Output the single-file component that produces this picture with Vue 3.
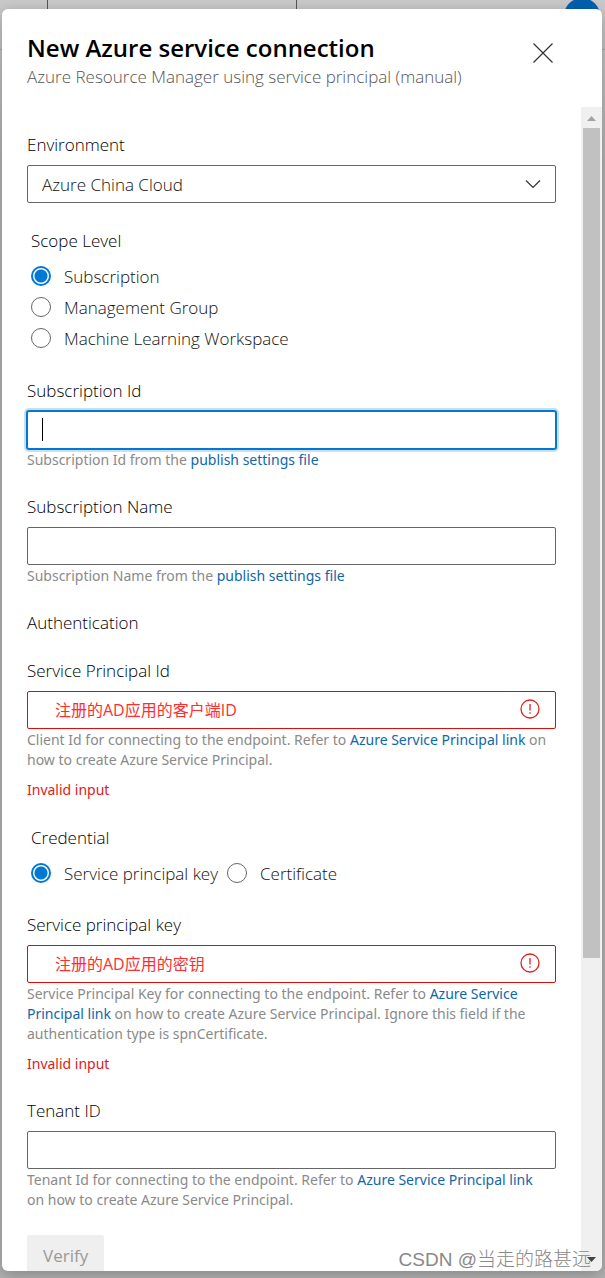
<script setup>
import {ref} from 'vue';

const environment = ref('Azure China Cloud');
const scopeLevel = ref('Subscription');
const credential = ref('Service principal key');

const scopeLevels = ['Subscription', 'Management Group', 'Machine Learning Workspace'];
const credentials = ['Service principal key', 'Certificate'];

const subscriptionId = ref('');
const subscriptionName = ref('');
const principalId = ref('注册的AD应用的客户端ID');
const principalKey = ref('注册的AD应用的密钥');
const tenantId = ref('');
</script>

<template>
  <div class="backdrop">
    <div class="page-behind">
      <span class="search-box"></span>
      <span class="avatar"></span>
    </div>

    <section class="panel" role="dialog" aria-labelledby="panel-title">
      <header class="panel-header">
        <div>
          <h1 id="panel-title">New Azure service connection</h1>
          <p class="subtitle">Azure Resource Manager using service principal (manual)</p>
        </div>
        <button class="close" type="button" aria-label="Close">
          <svg width="20" height="20" viewBox="0 0 20 20">
            <path d="M0.5 0.5L19.5 19.5M19.5 0.5L0.5 19.5" />
          </svg>
        </button>
      </header>

      <div class="panel-body">
        <form class="form" @submit.prevent>
          <div class="field">
            <label for="environment">Environment</label>
            <div class="control">
              <select id="environment" v-model="environment">
                <option>Azure China Cloud</option>
              </select>
              <svg class="chevron" width="16" height="10" viewBox="0 0 16 10">
                <path d="M1 1.5L8 8.5L15 1.5" />
              </svg>
            </div>
          </div>

          <fieldset>
            <legend>Scope Level</legend>
            <div class="radios stacked">
              <label v-for="level in scopeLevels" :key="level" class="radio">
                <input v-model="scopeLevel" type="radio" name="scope" :value="level">
                {{ level }}
              </label>
            </div>
          </fieldset>

          <div class="field">
            <label for="subscription-id">Subscription Id</label>
            <div class="control">
              <input id="subscription-id" v-model="subscriptionId" class="active" type="text">
              <span class="caret"></span>
            </div>
            <p class="help">Subscription Id from the <a href="#">publish settings file</a></p>
          </div>

          <div class="field">
            <label for="subscription-name">Subscription Name</label>
            <div class="control">
              <input id="subscription-name" v-model="subscriptionName" type="text">
            </div>
            <p class="help">Subscription Name from the <a href="#">publish settings file</a></p>
          </div>

          <h2>Authentication</h2>

          <div class="field">
            <label for="principal-id">Service Principal Id</label>
            <div class="control">
              <input id="principal-id" v-model="principalId" class="invalid" type="text">
              <svg class="alert" width="20" height="20" viewBox="0 0 20 20">
                <circle cx="10" cy="10" r="9" />
                <path d="M10 5V11.5M10 13.2V14.8" />
              </svg>
            </div>
            <p class="help">
              Client Id for connecting to the endpoint. Refer to
              <a href="#">Azure Service Principal link</a> on how to create Azure Service Principal.
            </p>
            <p class="error">Invalid input</p>
          </div>

          <fieldset>
            <legend>Credential</legend>
            <div class="radios">
              <label v-for="kind in credentials" :key="kind" class="radio">
                <input v-model="credential" type="radio" name="credential" :value="kind">
                {{ kind }}
              </label>
            </div>
          </fieldset>

          <div class="field">
            <label for="principal-key">Service principal key</label>
            <div class="control">
              <input id="principal-key" v-model="principalKey" class="invalid" type="text">
              <svg class="alert" width="20" height="20" viewBox="0 0 20 20">
                <circle cx="10" cy="10" r="9" />
                <path d="M10 5V11.5M10 13.2V14.8" />
              </svg>
            </div>
            <p class="help">
              Service Principal Key for connecting to the endpoint. Refer to
              <a href="#">Azure Service Principal link</a> on how to create Azure Service Principal.
              Ignore this field if the authentication type is spnCertificate.
            </p>
            <p class="error">Invalid input</p>
          </div>

          <div class="field">
            <label for="tenant-id">Tenant ID</label>
            <div class="control">
              <input id="tenant-id" v-model="tenantId" type="text">
            </div>
            <p class="help">
              Tenant Id for connecting to the endpoint. Refer to
              <a href="#">Azure Service Principal link</a> on how to create Azure Service Principal.
            </p>
          </div>

          <button class="verify" type="button" disabled>Verify</button>
        </form>

        <div class="scrollbar" aria-hidden="true">
          <svg class="arrow-up" width="21" height="21" viewBox="0 0 21 21"><path d="M6 14H15L10.5 9Z" /></svg>
          <span class="thumb"></span>
          <svg class="arrow-down" width="21" height="21" viewBox="0 0 21 21"><path d="M6 7H15L10.5 12Z" /></svg>
        </div>
      </div>
    </section>

    <span class="watermark">CSDN @当走的路甚远</span>
  </div>
</template>

<style>
body {
  margin: 0;
}
</style>

<style scoped>
.backdrop {
  position: relative;
  box-sizing: border-box;
  height: 100vh;
  padding: 9px 3px 7px 2px;
  overflow: hidden;
  background: linear-gradient(#cacaca, #b2b2b2 160px, #b2b2b2);
  font-family: "Open Sans", "Noto Sans", "Noto Sans CJK SC", sans-serif;
  font-size: 17px;
  font-weight: 300;
  line-height: 24px;
  color: #000;
}

/* the dimmed page under the panel */
.page-behind {
  position: absolute;
  top: 0;
  left: 0;
  right: 0;
  height: 49px;
  border-bottom: 1px solid #a8a8a8;
}

.search-box {
  position: absolute;
  top: 0;
  left: 47px;
  box-sizing: border-box;
  width: 250px;
  height: 20px;
  border: 1px solid #555;
  border-top: 0;
}

.avatar {
  position: absolute;
  top: -2px;
  right: 5px;
  width: 36px;
  height: 36px;
  border-radius: 50%;
  background: #0060b0;
}

.panel {
  position: relative;
  display: flex;
  flex-direction: column;
  height: 100%;
  overflow: hidden;
  border-radius: 6px;
  background: #fff;
  box-shadow: 0 4px 16px rgba(0, 0, 0, 0.25);
}

.panel-header {
  display: flex;
  flex: none;
  justify-content: space-between;
  box-sizing: border-box;
  height: 98px;
  padding: 23px 48px 0 25px;
}

h1 {
  margin: 0;
  font-size: 24px;
  line-height: 32px;
  font-weight: 600;
  color: #000;
}

.subtitle {
  margin: 1px 0 0;
  color: #555;
}

.close {
  width: 22px;
  height: 42px;
  padding: 0;
  border: 0;
  background: none;
}

.close svg {
  display: block;
  margin: auto;
}

.close path,
.chevron path {
  fill: none;
  stroke: #333;
  stroke-width: 1.2;
}

.panel-body {
  display: flex;
  flex: 1;
  min-height: 0;
}

.form {
  flex: 1;
  min-width: 0;
  overflow: hidden;
  padding: 26px 25px 0;
}

.field {
  margin: 0 0 24px;
  padding-bottom: 1px;
}

.field > label {
  display: block;
  margin-bottom: 8px;
}

h2 {
  margin: 0 0 24px;
  font-size: 17px;
  line-height: 24px;
  font-weight: 300;
}

fieldset {
  min-width: 0;
  margin: 0 0 24px;
  padding: 0 4px;
  border: 0;
}

legend {
  padding: 1px 0 0;
}

.control {
  position: relative;
}

.control input,
.control select {
  display: block;
  box-sizing: border-box;
  width: 100%;
  height: 38px;
  padding: 2px 14px 0;
  border: 1px solid #666;
  border-radius: 2px;
  outline: 0;
  appearance: none;
  background: #fff;
  font: inherit;
  color: #111;
}

.control .active {
  border-color: #0078d4;
  box-shadow: 0 0 0 1px #0078d4, 0 0 0 3px #c7e0f4;
}

.control .invalid {
  padding: 0 50px 3px 27px;
  border-color: #d90f0a;
  font-size: 16px;
  font-weight: 400;
  color: #ff2e2e;
}

.caret {
  position: absolute;
  top: 7px;
  left: 15px;
  width: 1px;
  height: 23px;
  background: #000;
}

.chevron {
  position: absolute;
  top: 14px;
  right: 15px;
}

.alert {
  position: absolute;
  top: 8px;
  right: 16px;
  fill: none;
  stroke: #e02020;
  stroke-width: 1.3;
}

.help,
.error {
  margin: 1px 0 0;
  padding-right: 6px;
  font-family: "Noto Sans", sans-serif;
  font-size: 14px;
  font-weight: 400;
  line-height: 20px;
  color: #8a8a8a;
}

.error {
  margin-top: 10px;
  color: #e0201a;
}

a {
  color: #0f66a8;
  text-decoration: none;
}

.radios {
  display: flex;
  gap: 9px;
  padding-top: 9px;
}

.radios.stacked {
  flex-direction: column;
  gap: 1px;
  padding-bottom: 1px;
}

.radio {
  display: flex;
  align-items: center;
  gap: 13px;
  height: 30px;
  color: #111;
}

.radio input {
  flex: none;
  box-sizing: border-box;
  width: 20px;
  height: 20px;
  margin: 0 0 2px;
  border: 1px solid #666;
  border-radius: 50%;
  appearance: none;
  background: #fff;
}

.radio input:checked {
  border: 2px solid #0078d4;
  background: radial-gradient(circle, #0078d4 6px, #fff 7px);
}

.verify {
  height: 40px;
  padding: 2px 16px 0;
  border: 0;
  border-radius: 2px;
  background: #efefef;
  font: inherit;
  font-weight: 500;
  color: #999;
}

.scrollbar {
  display: flex;
  flex: none;
  flex-direction: column;
  width: 21px;
  background: #f0f0f0;
}

.scrollbar svg {
  flex: none;
}

.arrow-up {
  fill: #a3a3a3;
}

.arrow-down {
  margin-top: auto;
  fill: #444;
}

.thumb {
  height: 71.3%;
  margin: 0 2px;
  background: #c1c1c1;
}

.watermark {
  position: absolute;
  right: 14px;
  bottom: 6px;
  font-family: "Liberation Sans", "Noto Sans CJK SC", sans-serif;
  font-size: 19px;
  font-weight: 300;
  color: #888;
}
</style>
